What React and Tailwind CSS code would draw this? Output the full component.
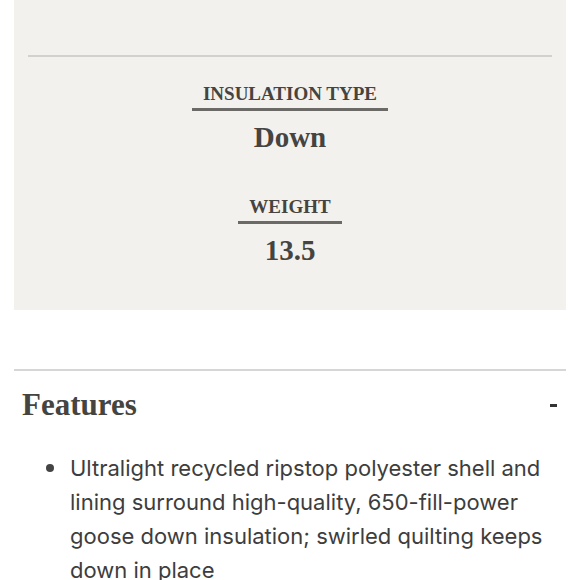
import React from "react";

const serif = "font-['Liberation_Serif','Times_New_Roman',serif]";
const sans = "font-['Inter','Roboto',sans-serif]";

const Spec = ({ label, value }) => (
  <div className="flex flex-col items-center">
    <div className={`${serif} border-b-[3px] border-[#6b6a66] px-[11px] pb-[3px] text-[19px] leading-[22px] font-bold text-[#454440]`}>
      {label}
    </div>
    <div className={`${serif} mt-[10px] text-[29px] leading-[32px] font-bold text-[#454440]`}>
      {value}
    </div>
  </div>
);

const App = () => {
  const features = [
    "Ultralight recycled ripstop polyester shell and lining surround high-quality, 650-fill-power goose down insulation; swirled quilting keeps down in place",
  ];

  return (
    <div className="w-[580px] h-[580px] overflow-hidden bg-white">
      <div className="mx-[14px] h-[310px] bg-[#f3f1ed] px-[14px] pt-[55px]">
        <div className="h-[2px] bg-[#d3d1cd]" />
        <div className="mt-[26px] flex flex-col gap-[43px]">
          <Spec label="INSULATION TYPE" value="Down" />
          <Spec label="WEIGHT" value="13.5" />
        </div>
      </div>

      <div className="mx-[14px] mt-[59px] border-t-2 border-[#d6d6d6]">
        <div className="flex items-center justify-between pl-[8px] pr-[9px] pt-[16px]">
          <h2 className={`${serif} text-[31px] leading-[36px] font-bold text-[#454440]`}>Features</h2>
          <span className="block h-[3px] w-[7px] bg-[#333]" />
        </div>
        <ul className="mt-[28px] pl-[56px] pr-[14px]">
          {features.map((f, i) => (
            <li key={i} className={`${sans} relative text-[22px] leading-[34px] text-[#3d3d3d]`}>
              <span className="absolute left-[-24px] top-[13px] h-[8px] w-[8px] rounded-full bg-[#444]" />
              {f}
            </li>
          ))}
        </ul>
      </div>
    </div>
  );
};

export default App;
